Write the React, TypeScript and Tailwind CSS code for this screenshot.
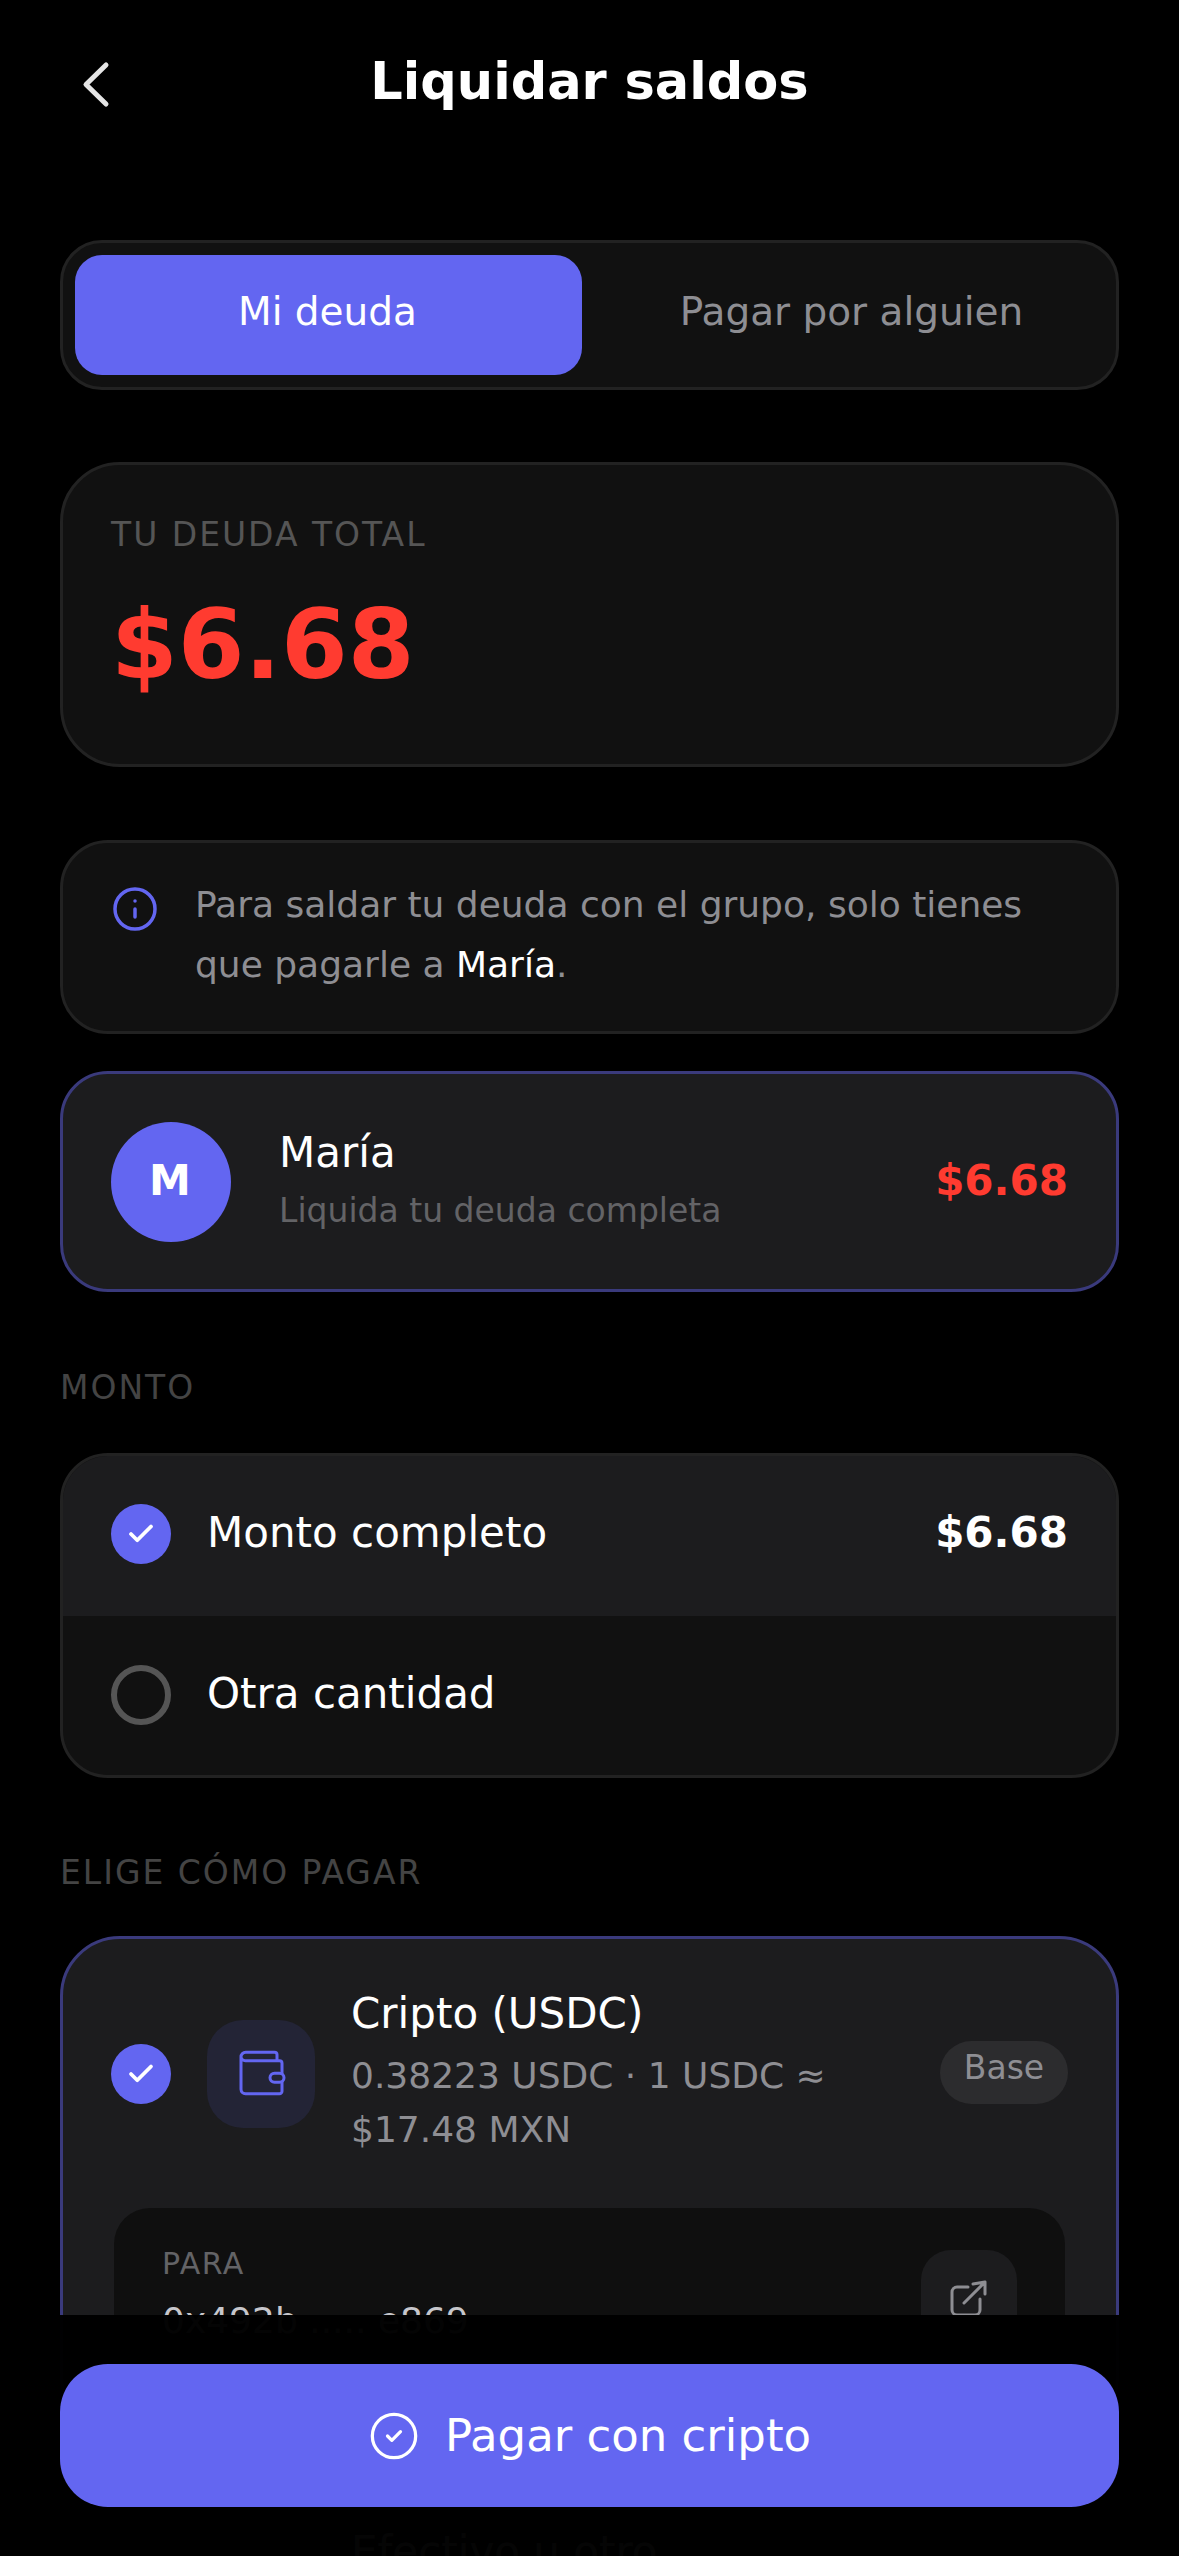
import { Check, CircleCheck, Info } from 'lucide-react';

function CheckDot() {
    return (
        <div className="flex h-[60px] w-[60px] shrink-0 items-center justify-center rounded-full bg-[#6366f1]">
            <Check size={30} strokeWidth={3} color="#fff" />
        </div>
    );
}

function BackIcon() {
    return (
        <svg width="36" height="54" viewBox="0 0 36 54" fill="none" stroke="#e5e5e5" strokeWidth="5" strokeLinecap="round" strokeLinejoin="round">
            <path d="M28 8 8 27.5 28 47" />
        </svg>
    );
}

function WalletIcon() {
    return (
        <svg width="54" height="54" viewBox="-3 -3 54 54" fill="none" stroke="#6366f1" strokeWidth="3" strokeLinecap="round" strokeLinejoin="round">
            <path d="M8.7 10.7H42.5a2.5 2.5 0 0 1 2.5 2.5V23.3M45 32.3V41.2a2.5 2.5 0 0 1-2.5 2.5H8.5a4.5 4.5 0 0 1-4.5-4.5V7a4.7 4.7 0 0 1 4.7-4.7H37.5a2.5 2.5 0 0 1 2.5 2.5V10.7M8.7 10.7a4.4 4.4 0 0 1-4.7-4" />
            <rect x="33" y="23.3" width="14" height="9" rx="4.5" />
        </svg>
    );
}

function OutIcon() {
    return (
        <svg width="48" height="48" viewBox="0 -2 48 48" fill="none" stroke="#8e8e93" strokeWidth="3" strokeLinecap="round" strokeLinejoin="round">
            <path d="M23 11H12a5 5 0 0 0-5 5v18a5 5 0 0 0 5 5h18a5 5 0 0 0 5-5V23" />
            <path d="M19 27 40 6M28 8l12-2v12" />
        </svg>
    );
}

export default function App() {
    return (
        <div className="relative h-[2556px] w-[1179px] overflow-hidden bg-black font-['DejaVu_Sans',sans-serif] text-white">
            <header className="relative flex h-[162px] items-center justify-center">
                <div className="absolute left-[78px] top-[57px]">
                    <BackIcon />
                </div>
                <h1 className="text-[51px] font-bold leading-none">Liquidar saldos</h1>
            </header>

            <main className="flex flex-col px-[60px] pt-[78px]">
                <div className="flex h-[150px] gap-[15px] rounded-[42px] border-[3px] border-[#222] bg-[#111] p-[12px]">
                    <div className="flex flex-1 items-center justify-center rounded-[27px] bg-[#6366f1] pb-[6px] pr-[2px] text-[39px]">Mi deuda</div>
                    <div className="flex flex-1 items-center justify-center pb-[6px] pl-[2px] text-[39px] text-[#8e8e93]">Pagar por alguien</div>
                </div>

                <section className="mt-[72px] h-[305px] rounded-[60px] border-[3px] border-[#222] bg-[#111] px-[48px] pt-[50px]">
                    <p className="text-[33px] leading-[40px] tracking-[1.98px] text-[#555]">TU DEUDA TOTAL</p>
                    <p className="mt-[33px] text-[96px] font-bold leading-[114px] text-[#ff3b30]">$6.68</p>
                </section>

                <section className="mt-[73px] flex h-[194px] gap-[36px] rounded-[48px] border-[3px] border-[#222] bg-[#111] px-[48px] pt-[32px]">
                    <Info size={48} strokeWidth={1.75} color="#6366f1" className="mt-[10px] shrink-0" />
                    <p className="text-[36px] leading-[60px] text-[#8e8e93]">
                        Para saldar tu deuda con el grupo, solo tienes que pagarle a <span className="text-white">María</span>.
                    </p>
                </section>

                <section className="mt-[37px] flex h-[221px] items-center rounded-[48px] border-[3px] border-[#3a3a7c] bg-[#1c1c1e] px-[48px]">
                    <div className="flex h-[120px] w-[120px] shrink-0 items-center justify-center rounded-full bg-[#6366f1] pb-[2px] pr-[2px] text-[42px] font-bold">M</div>
                    <div className="ml-[48px] flex-1 pb-[6px]">
                        <p className="text-[42px] leading-[54px]">María</p>
                        <p className="mt-[10px] text-[33px] leading-[42px] text-[#636366]">Liquida tu deuda completa</p>
                    </div>
                    <p className="pb-[3px] text-[42px] font-bold text-[#ff3b30]">$6.68</p>
                </section>

                <p className="mt-[78px] text-[33px] leading-[36px] tracking-[1.98px] text-[#444]">MONTO</p>

                <section className="mt-[47px] overflow-hidden rounded-[48px] border-[3px] border-[#222] bg-[#111]">
                    <div className="flex h-[160px] items-center gap-[36px] bg-[#1c1c1e] px-[48px] pb-[4px]">
                        <CheckDot />
                        <p className="flex-1 pb-[4px] text-[42px]">Monto completo</p>
                        <p className="pb-[4px] text-[42px] font-bold">$6.68</p>
                    </div>
                    <div className="flex h-[159px] items-center gap-[36px] px-[48px] pb-[2px]">
                        <div className="h-[60px] w-[60px] shrink-0 rounded-full border-[6px] border-[#555]" />
                        <p className="pb-[2px] text-[42px]">Otra cantidad</p>
                    </div>
                </section>

                <p className="mt-[77px] text-[33px] leading-[36px] tracking-[1.98px] text-[#444]">ELIGE CÓMO PAGAR</p>

                <section className="mt-[45px] rounded-[60px] border-[3px] border-[#3a3a7c] bg-[#1c1c1e] px-[48px] pb-[48px] pt-[48px]">
                    <div className="flex items-center">
                        <CheckDot />
                        <div className="ml-[36px] flex h-[108px] w-[108px] shrink-0 items-center justify-center rounded-[36px] bg-[#232436]">
                            <WalletIcon />
                        </div>
                        <div className="ml-[36px] flex-1 pb-[4px]">
                            <p className="text-[42px] leading-[54px]">Cripto (USDC)</p>
                            <p className="mt-[8px] w-[520px] text-[36px] leading-[54px] text-[#8e8e93]">0.38223 USDC · 1 USDC ≈ $17.48 MXN</p>
                        </div>
                        <div className="mb-[4px] flex h-[63px] w-[128px] items-start justify-center rounded-full bg-[#2c2c2e] pt-[6px] text-[33px] leading-[42px] text-[#8e8e93]">Base</div>
                    </div>
                    <div className="mx-[3px] mt-[47px] flex h-[177px] justify-between rounded-[36px] bg-[#0f0f0f] px-[48px] pt-[38px]">
                        <div>
                            <p className="text-[30px] leading-[36px] tracking-[1.5px] text-[#636366]">PARA</p>
                            <p className="mt-[17px] text-[36px] leading-[44px] text-[#c7c7cc]">0x492b ..... e869</p>
                        </div>
                        <div className="mt-[4px] flex h-[96px] w-[96px] items-center justify-center rounded-[30px] bg-[#1c1c1e]">
                            <OutIcon />
                        </div>
                    </div>
                </section>

                <section className="mt-[38px] flex items-center rounded-[60px] border-[3px] border-[#222] bg-[#111] p-[48px]">
                    <div className="h-[60px] w-[60px] shrink-0" />
                    <div className="ml-[36px] h-[108px] w-[108px] shrink-0" />
                    <p className="ml-[36px] self-start text-[42px] leading-[54px]">Efectivo u otro</p>
                </section>
            </main>

            <footer className="absolute inset-x-0 bottom-0 h-[241px] bg-black/98 px-[60px] pt-[49px]">
                <button className="flex h-[143px] w-full items-center justify-center gap-[25px] rounded-[48px] bg-[#6366f1] text-[45px]">
                    <CircleCheck size={52} strokeWidth={1.5} color="#fff" />
                    Pagar con cripto
                </button>
            </footer>
        </div>
    );
}
